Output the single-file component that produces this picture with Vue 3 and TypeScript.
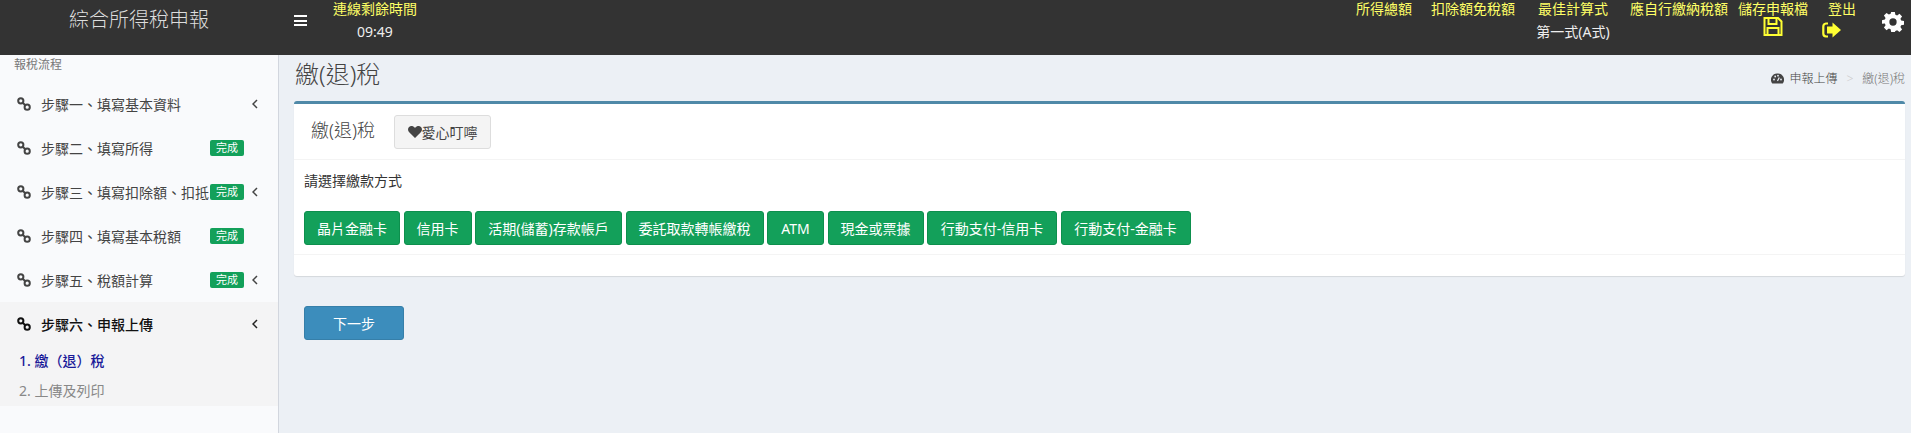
<script setup lang="ts">
interface Step { label: string; done: boolean; chevron: boolean }
const steps: Step[] = [
  { label: '步驟一、填寫基本資料', done: false, chevron: true },
  { label: '步驟二、填寫所得', done: true, chevron: false },
  { label: '步驟三、填寫扣除額、扣抵', done: true, chevron: true },
  { label: '步驟四、填寫基本稅額', done: true, chevron: false },
  { label: '步驟五、稅額計算', done: true, chevron: true },
]
const payments = [
  { label: '晶片金融卡', w: 96 },
  { label: '信用卡', w: 68 },
  { label: '活期(儲蓄)存款帳戶', w: 147 },
  { label: '委託取款轉帳繳稅', w: 138 },
  { label: 'ATM', w: 57 },
  { label: '現金或票據', w: 96 },
  { label: '行動支付-信用卡', w: 130 },
  { label: '行動支付-金融卡', w: 130 },
]
const stats = [
  { label: '所得總額', value: '', w: 92 },
  { label: '扣除額免稅額', value: '', w: 86 },
  { label: '最佳計算式', value: '第一式(A式)', w: 114 },
  { label: '應自行繳納稅額', value: '', w: 98 },
]
</script>

<template>
  <div class="page">
    <header class="topbar">
      <div class="logo">綜合所得稅申報</div>
      <button class="burger" aria-label="menu"><span></span><span></span><span></span></button>
      <div class="stat timer">
        <div class="stat-label">連線剩餘時間</div>
        <div class="stat-value">09:49</div>
      </div>
      <div class="spacer"></div>
      <div v-for="s in stats" :key="s.label" class="stat" :style="{ width: s.w + 'px' }">
        <div class="stat-label">{{ s.label }}</div>
        <div class="stat-value">{{ s.value }}</div>
      </div>
      <div class="tool save">
        <div class="tool-label">儲存申報檔</div>
        <svg width="20" height="19" viewBox="0 0 20 19" fill="none" stroke="#ffff33" stroke-width="2">
          <path d="M1.500 1h13.500l3.500 3.500v13.500h-17z" />
          <path d="M5.500 1v6h8v-6M4.500 18v-7h11v7" />
        </svg>
      </div>
      <div class="tool out">
        <div class="tool-label">登出</div>
        <svg width="19" height="16" viewBox="0 0 19 16">
          <path d="M6 1.500H4A3 3 0 0 0 1.300 4.500v7a3 3 0 0 0 2.700 3h2" fill="none" stroke="#ffff33" stroke-width="2.200" />
          <path d="M5 4.500h5.500V.5L19 8l-8.500 7.500v-4H5z" fill="#ffff33" />
        </svg>
      </div>
      <svg class="gear" width="22" height="22" viewBox="0 0 24 24">
        <path fill="#fff" fill-rule="evenodd" d="M10 1h4l.6 3.100 1.900.8 2.600-1.800 2.800 2.800-1.800 2.600.8 1.900 3.100.6v4l-3.100.6-.8 1.900 1.800 2.600-2.800 2.800-2.600-1.800-1.900.8L14 23h-4l-.6-3.100-1.900-.8-2.600 1.800-2.800-2.800 1.800-2.600-.8-1.900L0 14v-4l3.100-.6.8-1.900-1.800-2.600 2.800-2.800 2.600 1.800 1.900-.8zM12 8a4 4 0 1 0 0 8 4 4 0 0 0 0-8z" />
      </svg>
    </header>

    <div class="body">
      <aside class="sidebar">
        <div class="side-head">報稅流程</div>
        <ul class="menu">
          <li v-for="s in steps" :key="s.label" class="item">
            <svg class="link" width="14" height="14" viewBox="0 0 14 14" fill="none" stroke="#444" stroke-width="2">
              <circle cx="3.800" cy="3.800" r="2.600" /><circle cx="10.200" cy="10.200" r="2.600" /><path d="M5.500 5.500l3 3" />
            </svg>
            <span class="item-label">{{ s.label }}</span>
            <span v-if="s.done" class="badge">完成</span>
            <svg v-if="s.chevron" class="chev" width="6" height="10" viewBox="0 0 6 10" fill="none" stroke="#444" stroke-width="1.500"><path d="M5 1L1 5l4 4" /></svg>
          </li>
        </ul>
        <div class="active-group">
          <div class="item active">
            <svg class="link" width="14" height="14" viewBox="0 0 14 14" fill="none" stroke="#111" stroke-width="2">
              <circle cx="3.800" cy="3.800" r="2.600" /><circle cx="10.200" cy="10.200" r="2.600" /><path d="M5.500 5.500l3 3" />
            </svg>
            <span class="item-label">步驟六、申報上傳</span>
            <svg class="chev" width="6" height="10" viewBox="0 0 6 10" fill="none" stroke="#222" stroke-width="1.500"><path d="M5 1L1 5l4 4" /></svg>
          </div>
          <div class="sub current">1. 繳（退）稅</div>
          <div class="sub">2. 上傳及列印</div>
        </div>
      </aside>

      <main class="content">
        <div class="page-head">
          <h1>繳(退)稅</h1>
          <div class="crumb">
            <svg width="13" height="11" viewBox="0 0 13 11">
              <path fill="#444" fill-rule="evenodd" d="M6.500.5A6.200 6.200 0 0 0 1.300 10.500h10.400A6.200 6.200 0 0 0 6.500.5z" />
              <circle cx="3" cy="6.500" r=".9" fill="#ecf0f5" /><circle cx="4.200" cy="3.500" r=".9" fill="#ecf0f5" /><circle cx="7" cy="2.700" r=".9" fill="#ecf0f5" /><circle cx="10" cy="6.500" r=".9" fill="#ecf0f5" />
              <path d="M6.500 8l1.800-3.500" stroke="#ecf0f5" stroke-width="1.200" />
            </svg>
            <span>申報上傳</span><em>&gt;</em><span class="last">繳(退)稅</span>
          </div>
        </div>

        <section class="card">
          <div class="card-head">
            <h2>繳(退)稅</h2>
            <button class="note">
              <svg width="14" height="12" viewBox="0 0 14 12"><path fill="#444" d="M7 12L1.200 6.300C-.4 4.600-.3 2.100 1.100.9 2.600-.4 5.300-.2 7 2 8.700-.2 11.400-.4 12.900.9c1.400 1.200 1.500 3.700-.1 5.400z" /></svg>愛心叮嚀
            </button>
          </div>
          <div class="card-body">
            <p class="prompt">請選擇繳款方式</p>
            <div class="pay-row">
              <button v-for="p in payments" :key="p.label" class="pay" :style="{ width: p.w + 'px' }">{{ p.label }}</button>
            </div>
          </div>
        </section>

        <button class="next">下一步</button>
      </main>
    </div>
  </div>
</template>

<style>
html, body { margin: 0; background: #ecf0f5; }
</style>

<style scoped>
.page {
  width: 1911px;
  height: 433px;
  overflow: hidden;
  display: flex;
  flex-direction: column;
  font-family: "Noto Sans", "Noto Sans CJK TC", sans-serif;
  font-size: 14px;
  color: #333;
  background: #ecf0f5;
}
.topbar {
  height: 55px;
  flex: none;
  background: #333;
  display: flex;
  align-items: flex-start;
  color: #fff;
}
.logo {
  width: 278px;
  text-align: center;
  font-size: 20px;
  font-weight: 300;
  line-height: 40px;
  color: #ddd;
}
.burger {
  width: 13px;
  height: 11px;
  margin: 15px 0 0 16px;
  padding: 0;
  border: 0;
  background: none;
  display: flex;
  flex-direction: column;
  justify-content: space-between;
}
.burger span { display: block; height: 2px; background: #fff; }
.stat { text-align: center; flex: none; }
.timer { width: 84px; margin-left: 26px; }
.stat-label { color: #ffff66; font-size: 14px; line-height: 18px; white-space: nowrap; }
.stat-value { font-size: 14px; line-height: 18px; margin-top: 5px; min-height: 18px; color: #eee; }
.spacer { flex: 1; }
.tool { flex: none; color: #ffff66; }
.tool-label { font-size: 14px; white-space: nowrap; }
.tool svg { display: block; }
.save { width: 70px; margin-left: 10px; text-align: center; }
.save .tool-label { line-height: 17px; }
.out { width: 40px; margin-left: 14px; padding-top: 1px; text-align: center; }
.out .tool-label { line-height: 16px; }
.out svg { margin-top: 5px; }
.save svg { margin: 0 auto; }
.gear { flex: none; margin: 11px 7px 0 20px; }

.body { flex: 1; display: flex; min-height: 0; }
.sidebar {
  width: 278px;
  flex: none;
  background: #f9fafc;
  border-right: 1px solid #d2d6de;
}
.side-head { font-size: 12px; color: #777; line-height: 17px; padding: 1px 0 0 14px; margin-bottom: 9px; }
.menu { list-style: none; margin: 0; padding: 0; }
.item { height: 44px; display: flex; align-items: center; padding-left: 17px; }
.link { flex: none; }
.item-label { margin-left: 10px; width: 166px; white-space: nowrap; color: #444; font-size: 14px; flex: none; }
.badge {
  flex: none;
  margin-left: 3px;
  width: 34px;
  height: 16px;
  line-height: 16px;
  text-align: center;
  background: #13a05a;
  color: #fff;
  font-size: 11px;
  border-radius: 2px;
  margin-right: 8px;
}
.chev { flex: none; }
.item:not(:has(.badge)) .chev { margin-left: 45px; }
.active-group { background: #f4f4f5; height: 104px; }
.active .item-label { color: #111; font-weight: 500; }
.sub { height: 30px; line-height: 30px; padding-left: 19px; color: #888; font-size: 14px; }
.current { color: #1a1a99; font-weight: 500; }

.content { flex: 1; min-width: 0; padding: 0 6px 0 15px; }
.page-head { height: 46px; display: flex; align-items: center; justify-content: space-between; }
h1 { margin: 0 0 8px 1px; font-size: 24px; font-weight: 300; color: #444; line-height: 36px; }
.crumb { display: flex; align-items: center; font-size: 12px; color: #444; font-weight: 300; }
.crumb svg { margin-right: 5px; }
.crumb em { font-style: normal; color: #ccc; margin: 0 9px; }
.last { color: #777; }
.card {
  background: #fff;
  border-top: 3px solid #4f89a8;
  border-radius: 3px;
  box-shadow: 0 1px 1px rgba(0,0,0,.1);
  height: 175px;
  box-sizing: border-box;
}
.card-head { height: 56px; display: flex; align-items: center; padding-left: 17px; border-bottom: 1px solid #f4f4f4; box-sizing: border-box; }
h2 { margin: 0 0 6px; font-size: 18px; font-weight: 300; color: #444; }
.note {
  margin-left: 19px;
  width: 97px;
  height: 34px;
  border: 1px solid #ddd;
  border-radius: 3px;
  background: #f4f4f4;
  color: #444;
  font: inherit;
  padding: 0;
  display: flex;
  align-items: center;
  justify-content: center;
}
.card-body { padding: 0 10px; height: 95px; box-sizing: border-box; border-bottom: 1px solid #f4f4f4; }
.prompt { margin: 0; padding-top: 11px; line-height: 20px; height: 40px; font-size: 14px; color: #333; }
.pay-row { display: flex; gap: 3.500px; }
.pay {
  height: 34px;
  padding: 0;
  border: 1px solid #0d8f4d;
  border-radius: 3px;
  background: #13a05a;
  color: #fff;
  font: inherit;
  white-space: nowrap;
  flex: none;
}
.next {
  display: block;
  margin: 30px 0 0 10px;
  width: 100px;
  height: 34px;
  border: 1px solid #367fa9;
  border-radius: 3px;
  background: #3c8dbc;
  color: #fff;
  font: inherit;
}
</style>
